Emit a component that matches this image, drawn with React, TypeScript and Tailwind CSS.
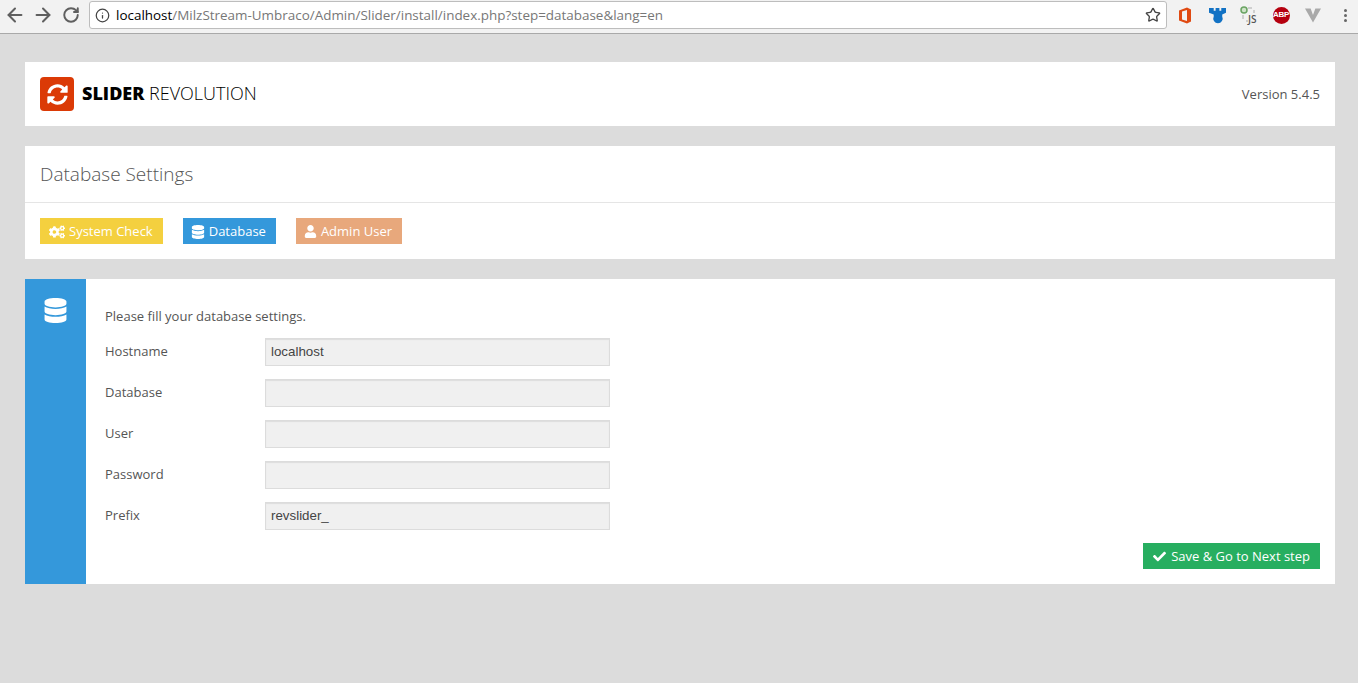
import { ArrowLeft, ArrowRight, RotateCw, Info, Star } from "lucide-react";
import { FaCogs, FaDatabase, FaUser, FaCheck, FaSyncAlt } from "react-icons/fa";

const FIELDS = [
  { label: "Hostname", value: "localhost" },
  { label: "Database", value: "" },
  { label: "User", value: "" },
  { label: "Password", value: "" },
  { label: "Prefix", value: "revslider_" },
];

function Toolbar() {
  return (
    <div className="flex h-[34px] items-start border-b border-[#a9a9a9] bg-[#f2f2f2] pt-[1px]">
      <div className="flex h-[28px] w-[89px] shrink-0 items-center text-[#5f5f5f]">
        <ArrowLeft size={22} strokeWidth={2.2} className="ml-[4px]" />
        <ArrowRight size={22} strokeWidth={2.2} className="ml-[6px]" />
        <RotateCw size={18} strokeWidth={2.6} className="ml-[8px]" />
      </div>
      <div className="flex h-[28px] w-[1078px] shrink-0 items-center rounded-[3px] border border-[#bdbdbd] bg-white">
        <Info size={15} strokeWidth={2} className="ml-[5px] text-[#444]" />
        <span className="ml-[6px] font-['Open_Sans',sans-serif] text-[13.45px] whitespace-nowrap text-[#777]">
          <span className="text-black">localhost</span>/MilzStream-Umbraco/Admin/Slider/install/index.php?step=database&amp;lang=en
        </span>
        <Star size={16} strokeWidth={2} className="mr-[5px] ml-auto text-[#444]" />
      </div>
      <div className="ml-[2px] flex h-[28px] flex-1 items-center">
        {/* extension icons, one 32px slot each */}
        <div className="flex w-[32px] justify-center">
          <svg width="14" height="17" viewBox="0 0 14 16">
            <path d="M1 3 9 0l4 2v12l-4 2-8-3zM9 2.500 4 4v8l5 1.500z" fill="#e04a12" fillRule="evenodd" />
          </svg>
        </div>
        <div className="flex w-[32px] justify-center">
          <svg width="17" height="17" viewBox="0 0 18 18">
            <path d="M0 1h5v3h2V1h4v3h2V1h5v5l-4 2v2a5 5 0 1 1-9 0V8L0 6z" fill="#1272c4" />
          </svg>
        </div>
        <div className="flex w-[32px] justify-center">
          <svg width="20" height="20" viewBox="0 0 20 20">
            <circle cx="5" cy="5" r="3" fill="#cfe3c8" stroke="#6aa463" strokeWidth="1.500" />
            <path d="M9 3h4M15 5v3M4 10v4M7 16h2" stroke="#c4c4c4" strokeWidth="1.500" />
            <text x="9" y="18" fontSize="10" fontWeight="600" fontFamily="Open Sans, sans-serif" fill="#555">
              JS
            </text>
          </svg>
        </div>
        <div className="flex w-[32px] justify-center">
          <div className="flex h-[17px] w-[17px] items-center justify-center rounded-full bg-[#b5000f] font-['Liberation_Sans',sans-serif] text-[8px] font-bold tracking-[-0.3px] text-white">
            ABP
          </div>
        </div>
        <div className="flex w-[32px] justify-center">
          <svg width="16" height="16" viewBox="0 0 17 16">
            <path d="M0 1h6l2.500 7L11 1h6l-8.500 15z" fill="#a9a9a9" />
          </svg>
        </div>
        <div className="flex w-[32px] justify-center">
          <div className="flex flex-col gap-[2px]">
            <span className="h-[3px] w-[3px] rounded-full bg-[#666]" />
            <span className="h-[3px] w-[3px] rounded-full bg-[#666]" />
            <span className="h-[3px] w-[3px] rounded-full bg-[#666]" />
          </div>
        </div>
      </div>
    </div>
  );
}

function StepBadge({ color, icon, label }: { color: string; icon: React.ReactNode; label: string }) {
  return (
    <span className={`flex h-[26px] items-center gap-[5px] px-[10px] pt-[1px] text-[13px] text-white ${color}`}>
      {icon}
      {label}
    </span>
  );
}

export default function App() {
  return (
    <div className="min-h-[683px] bg-[#dcdcdc] font-['Open_Sans',sans-serif] text-[#555]">
      <Toolbar />
      <div className="flex flex-col gap-[20px] px-[25px] pt-[28px] pr-[23px]">
        <div className="flex h-[64px] items-center justify-between bg-white px-[15px]">
          <div className="flex items-center">
            <div className="flex h-[34px] w-[34px] items-center justify-center rounded-[4px] bg-[#db3a06] text-white">
              <FaSyncAlt size={21} />
            </div>
            <span className="mt-[-1px] ml-[8px] text-[18px] text-black">
              <span className="font-extrabold">SLIDER</span> <span className="font-light">REVOLUTION</span>
            </span>
          </div>
          <span className="pt-[2px] text-[13px]">Version 5.4.5</span>
        </div>

        <div className="bg-white">
          <div className="flex h-[57px] items-center border-b border-[#e5e5e5] px-[15px] text-[19px] font-light text-[#555]">
            Database Settings
          </div>
          <div className="flex h-[56px] items-center gap-[20px] px-[15px]">
            <StepBadge color="bg-[#f4d03f]" icon={<FaCogs size={16} className="-mx-px" />} label="System Check" />
            <StepBadge color="bg-[#3498db]" icon={<FaDatabase size={14} className="-mx-[1.5px]" />} label="Database" />
            <StepBadge color="bg-[#e8a87c]" icon={<FaUser size={13} className="-mx-[1.5px]" />} label="Admin User" />
          </div>
        </div>

        <div className="flex h-[305px] bg-white">
          <div className="flex w-[61px] shrink-0 justify-center bg-[#3498db] pt-[19px] text-white">
            <FaDatabase size={25} />
          </div>
          <div className="flex-1 pt-[28px] pr-[15px] pl-[19px]">
            <p className="text-[13px] leading-[18px]">Please fill your database settings.</p>
            <div className="mt-[13px] flex flex-col gap-[13px]">
              {FIELDS.map((f) => (
                <label key={f.label} className="flex h-[28px] items-center text-[13px]">
                  <span className="w-[160px]">{f.label}</span>
                  <input
                    readOnly
                    value={f.value}
                    className="h-[28px] w-[345px] border border-[#dcdcdc] bg-[#f0f0f0] px-[5px] pb-[2px] font-['Liberation_Sans',sans-serif] text-[13.33px] text-[#444] shadow-[inset_0_1px_1px_rgba(0,0,0,0.08)] outline-none"
                  />
                </label>
              ))}
            </div>
            <div className="mt-[13px] flex justify-end">
              <span className="flex h-[26px] items-center gap-[5px] bg-[#27ae60] px-[10px] pt-[1px] text-[13px] text-white">
                <FaCheck size={13} />
                Save &amp; Go to Next step
              </span>
            </div>
          </div>
        </div>
      </div>
    </div>
  );
}
